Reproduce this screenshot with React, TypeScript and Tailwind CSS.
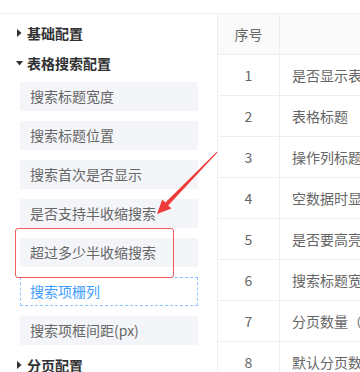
import React from 'react';

const items = [
  '搜索标题宽度',
  '搜索标题位置',
  '搜索首次是否显示',
  '是否支持半收缩搜索',
  '超过多少半收缩搜索',
  '搜索项栅列',
  '搜索项框间距(px)',
];

const rows = [
  '是否显示表格',
  '表格标题',
  '操作列标题',
  '空数据时显示',
  '是否要高亮',
  '搜索标题宽度',
  '分页数量（条）',
  '默认分页数量',
];

function Caret({ open }: { open?: boolean }) {
  return open ? (
    <svg width="7" height="8" viewBox="0 0 7 8" className="shrink-0">
      <polygon points="0,2 7,2 3.5,6.5" fill="#303133" />
    </svg>
  ) : (
    <svg width="7" height="8" viewBox="0 0 7 8" className="shrink-0">
      <polygon points="1,0 5.5,4 1,8" fill="#303133" />
    </svg>
  );
}

function Section({ title, open }: { title: string; open?: boolean }) {
  return (
    <div className="h-[30px] flex items-center gap-[4px] pl-[16px] text-[14px] font-semibold text-[#303133]">
      <Caret open={open} />
      <span>{title}</span>
    </div>
  );
}

export default function App() {
  return (
    <div
      className="relative w-[360px] h-[372px] overflow-hidden bg-white pt-[13px]"
      style={{ fontFamily: '"Noto Sans CJK SC", "Noto Sans", sans-serif' }}
    >
      <div className="flex border-t border-[#ebeef5]">
        {/* left config tree */}
        <div className="w-[217px] shrink-0 pt-[4px]">
          <Section title="基础配置" />
          <Section title="表格搜索配置" open />
          <div className="flex flex-col gap-[10px] mt-[4px] pl-[20px] w-[198px]">
            {items.map((t, i) =>
              i === 5 ? (
                <div
                  key={t}
                  className="h-[29px] flex items-center pl-[9px] text-[14px] text-[#409eff] border border-dashed border-[#8cc5ff]"
                >
                  {t}
                </div>
              ) : (
                <div key={t} className="h-[29px] flex items-center pl-[10px] text-[14px] text-[#666] bg-[#f4f5f9]">
                  {t}
                </div>
              )
            )}
          </div>
          <div className="mt-[5px]">
            <Section title="分页配置" />
          </div>
        </div>

        {/* table */}
        <div className="w-[300px] shrink-0 border-l border-[#ebeef5] text-[14px] text-[#666]">
          <div className="flex h-[41px] bg-[#fafafa] border-b border-[#ebeef5]">
            <div className="w-[62px] flex items-center justify-center border-r border-[#ebeef5]">序号</div>
            <div className="flex-1" />
          </div>
          {rows.map((r, i) => (
            <div key={i} className="flex h-[41px] border-b border-[#ebeef5]">
              <div className="w-[62px] flex items-center justify-center border-r border-[#ebeef5]">{i + 1}</div>
              <div className="flex-1 flex items-center pl-[12px] whitespace-nowrap">{r}</div>
            </div>
          ))}
        </div>
      </div>

      {/* highlight box */}
      <div className="absolute left-[15px] top-[228px] w-[159px] h-[50px] rounded-[3px] border-[1.5px] border-[#f25a5a] pointer-events-none" />

      {/* arrow */}
      <svg className="absolute left-0 top-0 pointer-events-none" width="360" height="372" viewBox="0 0 360 372">
        <polygon
          points="217.4,152.4 168.2,205.4 171.4,208.6 157,214 162.2,199.5 165.4,202.6 216.8,151.8"
          fill="#f03b3b"
        />
      </svg>
    </div>
  );
}
